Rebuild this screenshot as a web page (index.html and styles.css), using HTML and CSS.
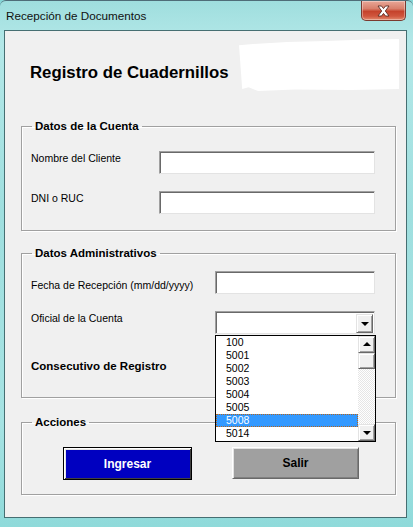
FILE: index.html
```html
<!DOCTYPE html>
<html lang="es">
<head>
<meta charset="utf-8">
<title>Recepción de Documentos</title>
<link rel="stylesheet" href="styles.css">
</head>
<body>
<div class="window">
  <div class="titlebar">
    <span class="title">Recepción de Documentos</span>
    <div class="close">
      <svg width="15" height="12" viewBox="0 0 15 12">
        <path d="M2 1 L5.5 1 L7.5 3.6 L9.5 1 L13 1 L9.3 6 L13 11 L9.5 11 L7.5 8.4 L5.5 11 L2 11 L5.7 6 Z" fill="#fff" stroke="#5a2a22" stroke-width="0.9" stroke-linejoin="round"/>
      </svg>
    </div>
  </div>
  <div class="client">
    <div class="header">
      <h1 class="heading">Registro de Cuadernillos</h1>
      <div class="blob"></div>
    </div>

    <fieldset class="group g1">
      <legend class="legend">Datos de la Cuenta</legend>
      <div class="row">
        <span class="lbl l1">Nombre del Cliente</span>
        <div class="input w216"></div>
      </div>
      <div class="row">
        <span class="lbl l1">DNI o RUC</span>
        <div class="input w216"></div>
      </div>
    </fieldset>

    <fieldset class="group g2">
      <legend class="legend">Datos Administrativos</legend>
      <div class="row">
        <span class="lbl l2 pfecha">Fecha de Recepción (mm/dd/yyyy)</span>
        <div class="input w160"></div>
      </div>
      <div class="row">
        <span class="lbl l2">Oficial de la Cuenta</span>
        <div class="combo">
          <div class="combo-field"></div>
          <div class="combo-btn"><span class="arrow-down"></span></div>
          <div class="droplist">
            <ul class="items">
              <li class="item">100</li>
              <li class="item">5001</li>
              <li class="item">5002</li>
              <li class="item">5003</li>
              <li class="item">5004</li>
              <li class="item">5005</li>
              <li class="item selected">5008</li>
              <li class="item">5014</li>
            </ul>
            <div class="vscroll">
              <div class="sbtn"><span class="arrow-up"></span></div>
              <div class="thumb"></div>
              <div class="track"></div>
              <div class="sbtn"><span class="arrow-down"></span></div>
            </div>
          </div>
        </div>
      </div>
      <div class="row">
        <span class="lbl l2 bold pcons">Consecutivo de Registro</span>
      </div>
    </fieldset>

    <fieldset class="group g3">
      <legend class="legend">Acciones</legend>
      <div class="buttons">
        <div class="btn btn-primary">Ingresar</div>
        <div class="btn btn-gray">Salir</div>
      </div>
    </fieldset>
  </div>
</div>
</body>
</html>
```

FILE: styles.css
```css
* { box-sizing: border-box; }
html, body { margin: 0; padding: 0; }
body {
  width: 413px;
  height: 527px;
  overflow: hidden;
  font-family: "Liberation Sans", Arial, sans-serif;
  background: #86d6d6;
}
.window {
  width: 413px;
  height: 527px;
  background: linear-gradient(180deg, #9fdede 0%, #b3e8e8 8%, #9fdfdf 40%, #a6e3e3 80%, #8fdada 100%);
  border-top: 1px solid #4f6d78;
  border-radius: 6px 6px 0 0;
  display: flex;
  flex-direction: column;
}
.titlebar {
  height: 29px;
  display: flex;
  align-items: flex-start;
  justify-content: space-between;
}
.title {
  font-size: 11.7px;
  color: #111;
  padding: 8px 0 0 6px;
  line-height: 14px;
}
.close {
  width: 45px;
  height: 20px;
  margin-right: 7px;
  border: 1px solid #7a3a30;
  border-top: none;
  border-radius: 0 0 5px 5px;
  background: linear-gradient(180deg, #e8a797 0%, #d8806c 40%, #c5432c 55%, #d0563e 80%, #e18a6e 100%);
  display: flex;
  align-items: center;
  justify-content: center;
  box-shadow: inset 0 0 0 1px rgba(255,255,255,0.35);
}
.close svg { display: block; }
.client {
  margin-left: 4px;
  width: 403px;
  height: 488px;
  border: 1px solid #466f72;
  background: #f0f0f0;
}
.header {
  height: 88px;
  display: flex;
  align-items: flex-start;
}
.heading {
  margin: 32px 0 0 25px;
  font-size: 16.8px;
  line-height: 20px;
  font-weight: bold;
  color: #000;
}
.blob {
  margin: 8px 7px 0 auto;
  width: 160px;
  height: 52px;
  background: #fff;
  clip-path: polygon(0% 12%, 12% 9%, 30% 6%, 55% 4%, 80% 1%, 100% 0%, 100% 96%, 70% 98%, 35% 97%, 12% 100%, 6% 93%, 2% 96%);
}
.group {
  margin: 0 0 0 16px;
  width: 375px;
  border: 1px solid #a0a0a0;
  box-shadow: 1px 1px 0 #fff, inset 1px 1px 0 #fff;
  padding: 0 0 0 9px;
  min-width: 0;
}
.legend {
  margin-left: 1px;
  padding: 0 3px;
  font-size: 11.5px;
  font-weight: bold;
  line-height: 14px;
  color: #000;
}
.g1 { padding-top: 18px; padding-bottom: 16px; }
.g2 { margin-top: 15px; padding-top: 11px; padding-bottom: 19px; }
.g3 { margin-top: 17px; padding-top: 18px; padding-bottom: 14px; }
.row {
  display: flex;
  align-items: flex-start;
  height: 23px;
}
.g1 .row + .row { margin-top: 17px; }
.g2 .row + .row { margin-top: 17px; }
.g2 .row:last-child { margin-top: 21px; }
.lbl {
  font-size: 10.5px;
  line-height: 14px;
  color: #000;
}
.l1 { width: 128px; }
.l2 { width: 184px; }
.bold { font-weight: bold; font-size: 11.5px; }
.pfecha { padding-top: 7px; }
.pcons { padding-top: 4px; }
.input {
  height: 23px;
  background: #fff;
  border-top: 1px solid #a0a0a0;
  border-left: 1px solid #a0a0a0;
  border-right: 1px solid #e3e3e3;
  border-bottom: 1px solid #e3e3e3;
  box-shadow: inset 1px 1px 0 #696969;
}
.w216 { width: 216px; }
.w160 { width: 160px; }
.combo {
  position: relative;
  width: 160px;
  height: 23px;
  background: #fff;
  border-top: 1px solid #a0a0a0;
  border-left: 1px solid #a0a0a0;
  border-right: 1px solid #e3e3e3;
  border-bottom: 1px solid #e3e3e3;
  box-shadow: inset 1px 1px 0 #696969;
  display: flex;
  justify-content: flex-end;
  padding: 2px 1px 1px 2px;
}
.combo-field { flex: 1; }
.combo-btn {
  width: 17px;
  height: 19px;
  background: #f0f0f0;
  border-top: 1px solid #e3e3e3;
  border-left: 1px solid #e3e3e3;
  border-right: 1px solid #696969;
  border-bottom: 1px solid #696969;
  box-shadow: inset 1px 1px 0 #fff, inset -1px -1px 0 #a0a0a0;
  display: flex;
  align-items: center;
  justify-content: center;
}
.arrow-down, .arrow-up {
  width: 0;
  height: 0;
  border-left: 4px solid transparent;
  border-right: 4px solid transparent;
}
.arrow-down { border-top: 4px solid #000; margin-top: 1px; }
.arrow-up { border-bottom: 4px solid #000; margin-top: -1px; }
.droplist {
  position: absolute;
  left: -1px;
  top: 23px;
  width: 161px;
  height: 107px;
  border: 1px solid #000;
  background: #fff;
  display: flex;
  z-index: 5;
}
.items {
  list-style: none;
  margin: 0;
  padding: 0;
  flex: 1;
}
.item {
  height: 13px;
  line-height: 13px;
  font-size: 10.5px;
  padding-left: 10px;
  color: #000;
}
.item.selected {
  background: #3399ff;
  color: #fff;
  outline: 1px dotted #b5651d;
  outline-offset: -1px;
}
.vscroll {
  width: 17px;
  display: flex;
  flex-direction: column;
}
.sbtn, .thumb {
  height: 17px;
  background: #f0f0f0;
  border-top: 1px solid #e3e3e3;
  border-left: 1px solid #e3e3e3;
  border-right: 1px solid #696969;
  border-bottom: 1px solid #696969;
  box-shadow: inset 1px 1px 0 #fff, inset -1px -1px 0 #a0a0a0;
  display: flex;
  align-items: center;
  justify-content: center;
}
.thumb { height: 16px; }
.track {
  flex: 1;
  background-color: #fff;
  background-image: repeating-conic-gradient(#e6e6e6 0% 25%, #ffffff 0% 50%);
  background-size: 2px 2px;
}
.buttons {
  display: flex;
  align-items: flex-start;
  padding-left: 32px;
}
.btn {
  height: 32px;
  display: flex;
  align-items: center;
  justify-content: center;
  font-size: 12px;
  font-weight: bold;
}
.btn-primary {
  width: 129px;
  height: 33px;
  background: #0000c0;
  color: #fff;
  border: 1px solid #000;
  box-shadow: inset 1px 1px 0 #fff, inset -1px -1px 0 #404040, inset 2px 2px 0 #e3e3e3;
}
.btn-gray {
  width: 127px;
  margin-left: 40px;
  background: #a0a0a0;
  color: #000;
  border-top: 1px solid #fff;
  border-left: 1px solid #fff;
  border-right: 1px solid #696969;
  border-bottom: 1px solid #696969;
  box-shadow: inset 1px 1px 0 #e3e3e3, inset -1px -1px 0 #808080;
}
```
